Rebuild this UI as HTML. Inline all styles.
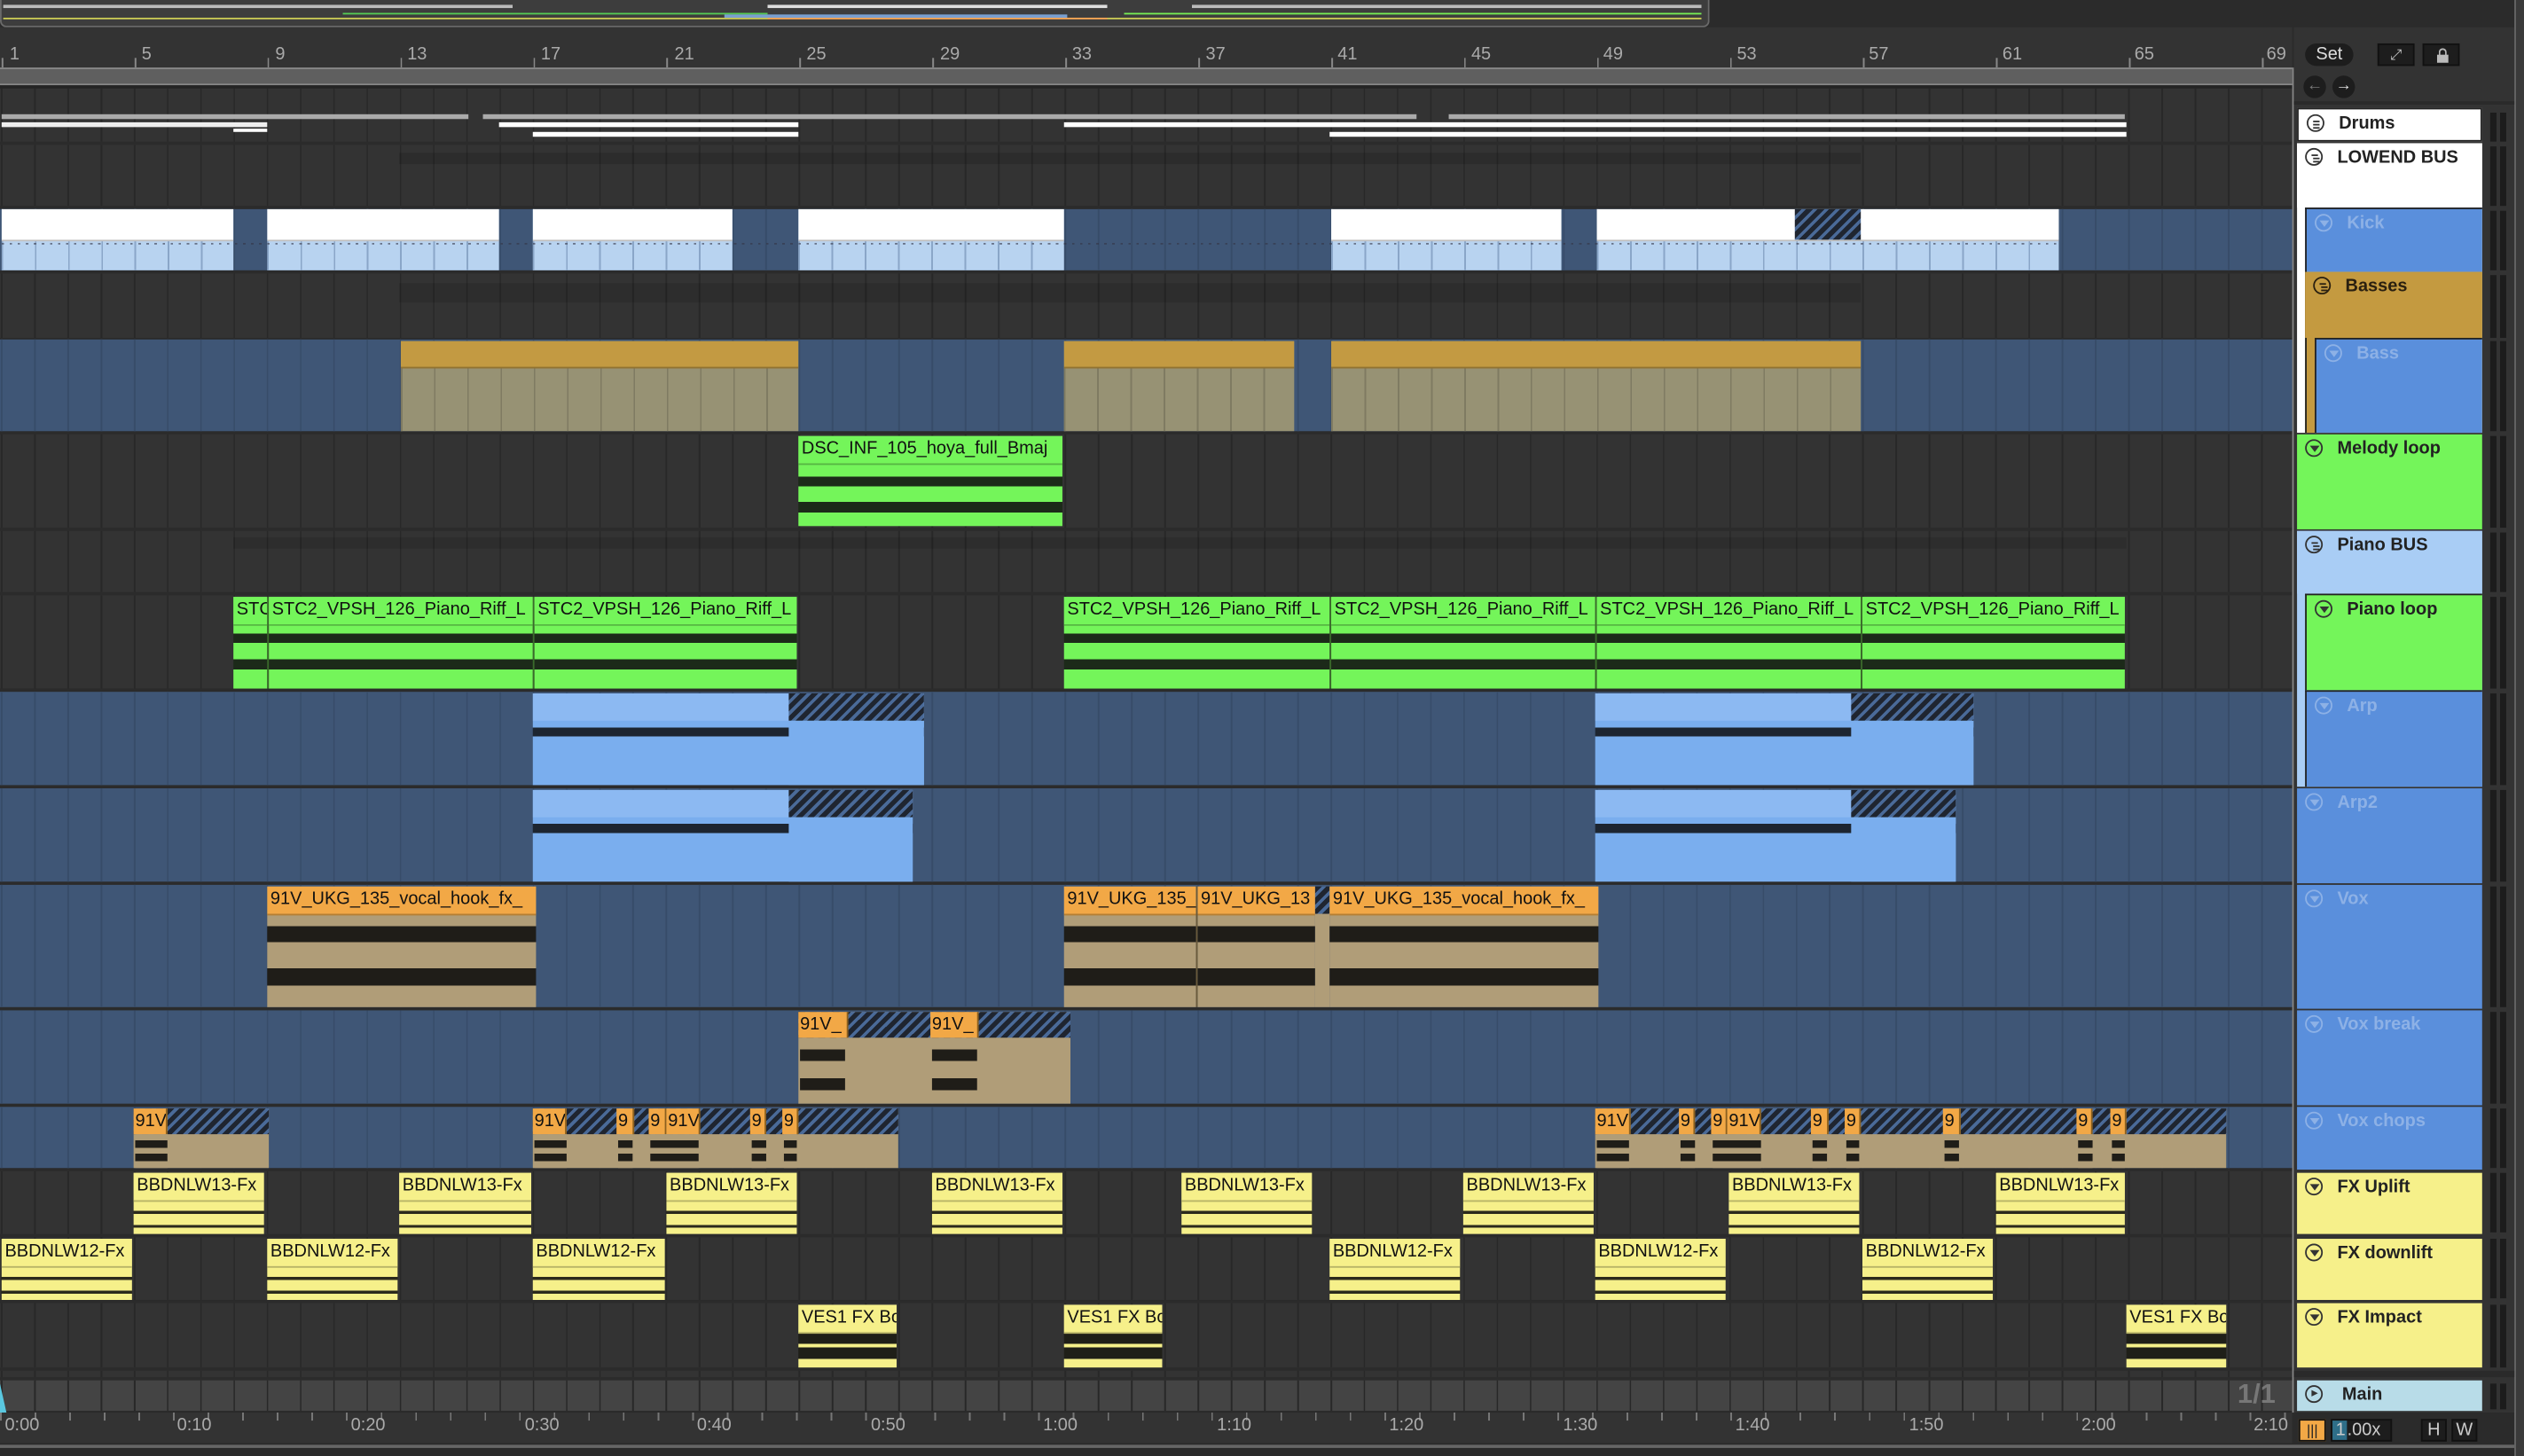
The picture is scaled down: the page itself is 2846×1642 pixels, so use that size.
<!DOCTYPE html>
<html><head><meta charset="utf-8"><style>
html,body{margin:0;padding:0;background:#2a2a2a;overflow:hidden}
#w{position:absolute;left:0;top:0;width:1568px;height:905px;transform:scale(1.81505,1.81436);transform-origin:0 0;background:#2b2b2b;font-family:"Liberation Sans",sans-serif;overflow:hidden}
.a{position:absolute;box-sizing:border-box}
.r{position:absolute;left:0;width:1424px;background-color:#333;background-image:repeating-linear-gradient(90deg,#282828 0 1px,transparent 1px 20.65px);background-position:0.5px 0}
.b{background-color:#3f5676;background-image:repeating-linear-gradient(90deg,#374c69 0 1px,transparent 1px 20.65px)}
.c{position:absolute;box-sizing:border-box;overflow:hidden;font-family:"Liberation Sans Narrow","Liberation Sans",sans-serif;font-size:11px;color:#111;white-space:nowrap}
.c .t{height:17px;line-height:17px;padding-left:2px;overflow:hidden;border-bottom:1px solid rgba(0,0,0,.25)}
.g{background:linear-gradient(#74f55a 0 40%,#1c2a19 40% 50%,#74f55a 50% 68%,#1c2a19 68% 79%,#74f55a 79%)}
.g .t{background:#74f55a}
.k{background-color:#b8d3f0;background-image:repeating-linear-gradient(90deg,#8aa6c8 0 1px,transparent 1px 20.65px)}
.k .t{background:#fff;height:19px}
.bs{background-color:#979274;background-image:repeating-linear-gradient(90deg,#7f7b62 0 1px,transparent 1px 20.65px)}
.bs .t{background:#c39a42;height:16px}
.ar{background:linear-gradient(#7aaeee 0 37%,#1d2530 37% 47%,#7aaeee 47%)}
.ar .t{background:#8cb9f2;border:0}
.h{background:repeating-linear-gradient(135deg,#1f2530 0 3px,#4a6a98 3px 5px)}
.v{background:linear-gradient(#b09d78 0 33%,#1f1d18 33% 46%,#b09d78 46% 68%,#1f1d18 68% 82%,#b09d78 82%)}
.v .t{background:#f2a846}
.vc{background:linear-gradient(#b09d78 0 18%,#1f1d18 18% 40%,#b09d78 40% 58%,#1f1d18 58% 80%,#b09d78 80%)}
.y{background:linear-gradient(#f6f08a 0 62%,#2b2a1c 62% 67%,#f6f08a 67% 85%,#2b2a1c 85% 90%,#f6f08a 90%)}
.y .t{background:#f6f08a}
.im{background:linear-gradient(#f6f08a 0 46%,#1f1f18 46% 62%,#f6f08a 62% 68%,#1f1f18 68% 86%,#f6f08a 86%)}
.im .t{background:#f6f08a}
.o{position:absolute;height:16px;background:#f2a846;font-family:"Liberation Sans Narrow","Liberation Sans",sans-serif;font-size:11px;line-height:16px;padding-left:1px;overflow:hidden;box-sizing:border-box;color:#111;border-right:1px solid #8a6020}
.hd{position:absolute;box-sizing:border-box;font-size:11px;font-weight:bold;color:#222;padding-left:25px;line-height:19px;border:1px solid #222}
.hd i{position:absolute;left:5px;top:3px;width:11px;height:11px;border:1.3px solid #333;border-radius:50%;box-sizing:border-box;font-style:normal}
.fd{color:#8db1e6}.fd i{border-color:#8db1e6}
.m{position:absolute;left:1547px;width:11px;background:linear-gradient(90deg,#1c1c1c 0 4px,transparent 4px 6px,#1c1c1c 6px 10px,transparent 10px)}
.tri{position:absolute;left:2px;top:2.5px;width:0;height:0;border-left:3px solid transparent;border-right:3px solid transparent;border-top:4px solid currentColor}
.lin{position:absolute;left:2.5px;width:4px;height:1.2px;background:#333}
.bn{position:absolute;font-size:11px;color:#aaa}
.tl{position:absolute;font-size:11px;color:#aaa;top:880px}
</style></head><body><div id="w">

<!-- overview -->
<div class="a" style="left:0;top:0;width:1062px;height:17px;background:#3d3d3d;border:1px solid #6a6a6a;border-top:0;border-radius:0 0 4px 4px"></div>
<div class="a" style="left:2px;top:3px;width:1055px;height:2px;background:linear-gradient(90deg,#bbb 0 30%,transparent 30% 45%,#ddd 45% 65%,transparent 65% 70%,#bbb 70% 100%)"></div>
<div class="a" style="left:2px;top:8px;width:1055px;height:1px;background:linear-gradient(90deg,transparent 0 20%,#5c5 20% 45%,transparent 45% 66%,#7e5 66% 100%)"></div>
<div class="a" style="left:2px;top:11px;width:1055px;height:1px;background:linear-gradient(90deg,#cc5 0 45%,#fa5 45% 65%,#cc5 65% 100%)"></div>
<div class="a" style="left:450px;top:9px;width:213px;height:2px;background:#7aa0d0"></div>

<!-- ruler -->
<div class="a" style="left:0;top:17px;width:1424px;height:25px;background:#333"></div>
<span class="bn" style="left:6px;top:28px">1</span><span class="bn" style="left:88px;top:28px">5</span><span class="bn" style="left:171px;top:28px">9</span><span class="bn" style="left:253px;top:28px">13</span><span class="bn" style="left:336px;top:28px">17</span><span class="bn" style="left:419px;top:28px">21</span><span class="bn" style="left:501px;top:28px">25</span><span class="bn" style="left:584px;top:28px">29</span><span class="bn" style="left:666px;top:28px">33</span><span class="bn" style="left:749px;top:28px">37</span><span class="bn" style="left:831px;top:28px">41</span><span class="bn" style="left:914px;top:28px">45</span><span class="bn" style="left:996px;top:28px">49</span><span class="bn" style="left:1079px;top:28px">53</span><span class="bn" style="left:1161px;top:28px">57</span><span class="bn" style="left:1244px;top:28px">61</span><span class="bn" style="left:1326px;top:28px">65</span><span class="bn" style="left:1408px;top:28px">69</span>
<div class="a" style="left:0;top:36px;width:1424px;height:6px;background:repeating-linear-gradient(90deg,#888 0 1px,transparent 1px 82.6px);background-position:1px 0"></div>
<div class="a" style="left:0;top:42px;width:1424px;height:11px;background:#5f5f5f;border-top:1px solid #888;border-bottom:1px solid #888"></div>
<div class="a" style="left:0;top:53px;width:1424px;height:2px;background:#242424"></div>

<!-- tracks -->
<div class="r" style="top:55px;height:33px"></div>
<div class="a" style="left:1px;top:71px;width:290px;height:3px;background:#aaa"></div>
<div class="a" style="left:300px;top:71px;width:580px;height:3px;background:#aaa"></div>
<div class="a" style="left:900px;top:71px;width:420px;height:3px;background:#aaa"></div>
<div class="a" style="left:1px;top:76px;width:165px;height:3px;background:#eee"></div>
<div class="a" style="left:310px;top:76px;width:186px;height:3px;background:#fff"></div>
<div class="a" style="left:661px;top:76px;width:660px;height:3px;background:#fff"></div>
<div class="a" style="left:331px;top:82px;width:165px;height:3px;background:#fff"></div>
<div class="a" style="left:826px;top:82px;width:495px;height:3px;background:#fff"></div>
<div class="a" style="left:145px;top:80px;width:21px;height:2px;background:#fff"></div>

<div class="r" style="top:90px;height:38px"></div>
<div class="a" style="left:248px;top:95px;width:908px;height:7px;background:rgba(0,0,0,.12)"></div>
<div class="r b" style="top:130px;height:38px"></div>
<div class="r" style="top:170px;height:40px"></div>
<div class="a" style="left:248px;top:176px;width:908px;height:12px;background:rgba(0,0,0,.1)"></div>
<div class="r b" style="top:211px;height:57px"></div>
<div class="r" style="top:270px;height:58px"></div>
<div class="r" style="top:330px;height:38px"></div>
<div class="a" style="left:145px;top:334px;width:1176px;height:7px;background:rgba(0,0,0,.1)"></div>
<div class="r" style="top:370px;height:58px"></div>
<div class="r b" style="top:430px;height:58px"></div>
<div class="r b" style="top:490px;height:58px"></div>
<div class="r b" style="top:550px;height:76px"></div>
<div class="r b" style="top:628px;height:58px"></div>
<div class="r b" style="top:688px;height:38px"></div>
<div class="r" style="top:728px;height:39px"></div>
<div class="r" style="top:769px;height:39px"></div>
<div class="r" style="top:810px;height:40px"></div>
<div class="r" style="top:852px;height:4px"></div>
<div class="r" style="top:858px;height:19px;background-color:#444"></div>
<div class="a" style="left:1390px;top:857px;font-size:17px;font-weight:bold;color:#777">1/1</div>

<!-- Kick -->
<div class="c k" style="left:1px;top:130px;width:144px;height:38px"><div class="t"></div></div>
<div class="c k" style="left:166px;top:130px;width:144px;height:38px"><div class="t"></div></div>
<div class="c k" style="left:331px;top:130px;width:124px;height:38px"><div class="t"></div></div>
<div class="c k" style="left:496px;top:130px;width:165px;height:38px"><div class="t"></div></div>
<div class="c k" style="left:827px;top:130px;width:143px;height:38px"><div class="t"></div></div>
<div class="c k" style="left:992px;top:130px;width:165px;height:38px"><div class="t"></div></div>
<div class="a h" style="left:1115px;top:130px;width:41px;height:19px"></div>
<div class="c k" style="left:1157px;top:130px;width:122px;height:38px"><div class="t"></div></div>
<div class="a" style="left:1px;top:151px;width:1280px;height:1px;background:repeating-linear-gradient(90deg,#334 0 1.5px,transparent 1.5px 5px);opacity:.6"></div>

<!-- Bass -->
<div class="c bs" style="left:249px;top:212px;width:247px;height:56px"><div class="t"></div></div>
<div class="c bs" style="left:661px;top:212px;width:143px;height:56px"><div class="t"></div></div>
<div class="c bs" style="left:827px;top:212px;width:329px;height:56px"><div class="t"></div></div>

<!-- Melody -->
<div class="c g" style="left:496px;top:271px;width:164px;height:56px;background:linear-gradient(#74f55a 0 45%,#1c2a19 45% 56%,#74f55a 56% 73%,#1c2a19 73% 85%,#74f55a 85%)"><div class="t">DSC_INF_105_hoya_full_Bmaj</div></div>

<!-- Piano loop -->
<div class="c g" style="left:145px;top:371px;width:21px;height:57px"><div class="t">STC2</div></div>
<div class="c g" style="left:166px;top:371px;width:165px;height:57px;border-left:1px solid #3a6a2a"><div class="t">STC2_VPSH_126_Piano_Riff_L</div></div>
<div class="c g" style="left:331px;top:371px;width:164px;height:57px;border-left:1px solid #3a6a2a"><div class="t">STC2_VPSH_126_Piano_Riff_L</div></div>
<div class="c g" style="left:661px;top:371px;width:165px;height:57px"><div class="t">STC2_VPSH_126_Piano_Riff_L</div></div>
<div class="c g" style="left:826px;top:371px;width:165px;height:57px;border-left:1px solid #3a6a2a"><div class="t">STC2_VPSH_126_Piano_Riff_L</div></div>
<div class="c g" style="left:991px;top:371px;width:165px;height:57px;border-left:1px solid #3a6a2a"><div class="t">STC2_VPSH_126_Piano_Riff_L</div></div>
<div class="c g" style="left:1156px;top:371px;width:164px;height:57px;border-left:1px solid #3a6a2a"><div class="t">STC2_VPSH_126_Piano_Riff_L</div></div>

<!-- Arp -->
<div class="c ar" style="left:331px;top:431px;width:243px;height:57px"><div class="t"></div></div>
<div class="a h" style="left:490px;top:431px;width:84px;height:17px"></div>
<div class="a" style="left:490px;top:448px;width:84px;height:40px;background:#7aaeee"></div>
<div class="c ar" style="left:991px;top:431px;width:235px;height:57px"><div class="t"></div></div>
<div class="a h" style="left:1150px;top:431px;width:76px;height:17px"></div>
<div class="a" style="left:1150px;top:448px;width:76px;height:40px;background:#7aaeee"></div>
<!-- Arp2 -->
<div class="c ar" style="left:331px;top:491px;width:236px;height:57px"><div class="t"></div></div>
<div class="a h" style="left:490px;top:491px;width:77px;height:17px"></div>
<div class="a" style="left:490px;top:508px;width:77px;height:40px;background:#7aaeee"></div>
<div class="c ar" style="left:991px;top:491px;width:224px;height:57px"><div class="t"></div></div>
<div class="a h" style="left:1150px;top:491px;width:65px;height:17px"></div>
<div class="a" style="left:1150px;top:508px;width:65px;height:40px;background:#7aaeee"></div>

<!-- Vox -->
<div class="c v" style="left:166px;top:551px;width:167px;height:75px"><div class="t">91V_UKG_135_vocal_hook_fx_</div></div>
<div class="c v" style="left:661px;top:551px;width:82px;height:75px"><div class="t">91V_UKG_135_</div></div>
<div class="c v" style="left:743px;top:551px;width:74px;height:75px;border-left:1px solid #6a5a3a"><div class="t">91V_UKG_13</div></div>
<div class="a h" style="left:817px;top:551px;width:9px;height:17px"></div>
<div class="a" style="left:817px;top:568px;width:9px;height:58px;background:#b09d78"></div>
<div class="c v" style="left:826px;top:551px;width:167px;height:75px"><div class="t">91V_UKG_135_vocal_hook_fx_</div></div>

<!-- Vox break -->
<div class="a" style="left:496px;top:629px;width:169px;height:57px;background:#b09d78"></div>
<div class="a h" style="left:496px;top:629px;width:169px;height:16px"></div>
<div class="o" style="left:496px;top:629px;width:31px">91V_</div>
<div class="o" style="left:578px;top:629px;width:30px">91V_</div>
<div class="a" style="left:497px;top:648px;width:28px;height:36px;background:linear-gradient(#b09d78 0 12%,#1f1d18 12% 32%,#b09d78 32% 62%,#1f1d18 62% 82%,#b09d78 82%)"></div>
<div class="a" style="left:579px;top:648px;width:28px;height:36px;background:linear-gradient(#b09d78 0 12%,#1f1d18 12% 32%,#b09d78 32% 62%,#1f1d18 62% 82%,#b09d78 82%)"></div>

<!-- Vox chops -->
<div class="a" style="left:83px;top:689px;width:84px;height:37px;background:#b09d78"></div>
<div class="a h" style="left:83px;top:689px;width:84px;height:16px"></div>
<div class="o" style="left:83px;top:689px;width:21px">91V</div>
<div class="a vc" style="left:84px;top:705px;width:20px;height:21px"></div>
<div class="a" style="left:331px;top:689px;width:227px;height:37px;background:#b09d78"></div>
<div class="a h" style="left:331px;top:689px;width:227px;height:16px"></div>
<div class="o" style="left:331px;top:689px;width:21px">91V</div><div class="o" style="left:383px;top:689px;width:11px">9</div><div class="o" style="left:403px;top:689px;width:11px">9</div><div class="o" style="left:414px;top:689px;width:21px">91V</div><div class="o" style="left:466px;top:689px;width:10px">9</div><div class="o" style="left:486px;top:689px;width:10px">9</div>
<div class="a vc" style="left:332px;top:705px;width:20px;height:21px"></div><div class="a vc" style="left:384px;top:705px;width:9px;height:21px"></div><div class="a vc" style="left:404px;top:705px;width:30px;height:21px"></div><div class="a vc" style="left:467px;top:705px;width:9px;height:21px"></div><div class="a vc" style="left:487px;top:705px;width:8px;height:21px"></div>
<div class="a" style="left:991px;top:689px;width:392px;height:37px;background:#b09d78"></div>
<div class="a h" style="left:991px;top:689px;width:392px;height:16px"></div>
<div class="o" style="left:991px;top:689px;width:22px">91V</div><div class="o" style="left:1043px;top:689px;width:10px">9</div><div class="o" style="left:1063px;top:689px;width:10px">9</div><div class="o" style="left:1073px;top:689px;width:21px">91V</div><div class="o" style="left:1125px;top:689px;width:11px">9</div><div class="o" style="left:1146px;top:689px;width:10px">9</div><div class="o" style="left:1207px;top:689px;width:11px">9</div><div class="o" style="left:1290px;top:689px;width:10px">9</div><div class="o" style="left:1311px;top:689px;width:10px">9</div>
<div class="a vc" style="left:992px;top:705px;width:20px;height:21px"></div><div class="a vc" style="left:1044px;top:705px;width:9px;height:21px"></div><div class="a vc" style="left:1064px;top:705px;width:30px;height:21px"></div><div class="a vc" style="left:1126px;top:705px;width:9px;height:21px"></div><div class="a vc" style="left:1147px;top:705px;width:8px;height:21px"></div><div class="a vc" style="left:1208px;top:705px;width:9px;height:21px"></div><div class="a vc" style="left:1291px;top:705px;width:9px;height:21px"></div><div class="a vc" style="left:1312px;top:705px;width:8px;height:21px"></div>

<!-- FX Uplift -->
<div class="c y" style="left:83px;top:729px;width:81px;height:38px"><div class="t">BBDNLW13-Fx</div></div>
<div class="c y" style="left:248px;top:729px;width:82px;height:38px"><div class="t">BBDNLW13-Fx</div></div>
<div class="c y" style="left:414px;top:729px;width:81px;height:38px"><div class="t">BBDNLW13-Fx</div></div>
<div class="c y" style="left:579px;top:729px;width:81px;height:38px"><div class="t">BBDNLW13-Fx</div></div>
<div class="c y" style="left:734px;top:729px;width:81px;height:38px"><div class="t">BBDNLW13-Fx</div></div>
<div class="c y" style="left:909px;top:729px;width:81px;height:38px"><div class="t">BBDNLW13-Fx</div></div>
<div class="c y" style="left:1074px;top:729px;width:81px;height:38px"><div class="t">BBDNLW13-Fx</div></div>
<div class="c y" style="left:1240px;top:729px;width:80px;height:38px"><div class="t">BBDNLW13-Fx</div></div>
<!-- FX downlift -->
<div class="c y" style="left:1px;top:770px;width:81px;height:38px"><div class="t">BBDNLW12-Fx</div></div>
<div class="c y" style="left:166px;top:770px;width:81px;height:38px"><div class="t">BBDNLW12-Fx</div></div>
<div class="c y" style="left:331px;top:770px;width:82px;height:38px"><div class="t">BBDNLW12-Fx</div></div>
<div class="c y" style="left:826px;top:770px;width:81px;height:38px"><div class="t">BBDNLW12-Fx</div></div>
<div class="c y" style="left:991px;top:770px;width:81px;height:38px"><div class="t">BBDNLW12-Fx</div></div>
<div class="c y" style="left:1157px;top:770px;width:81px;height:38px"><div class="t">BBDNLW12-Fx</div></div>
<!-- FX Impact -->
<div class="c im" style="left:496px;top:811px;width:61px;height:39px"><div class="t">VES1 FX Bo</div></div>
<div class="c im" style="left:661px;top:811px;width:61px;height:39px"><div class="t">VES1 FX Bo</div></div>
<div class="c im" style="left:1321px;top:811px;width:62px;height:39px"><div class="t">VES1 FX Bo</div></div>

<!-- time ruler -->
<div class="a" style="left:0;top:877px;width:1424px;height:20px;background:#333;border-top:1px solid #2a2a2a"></div>
<div class="a" style="left:0;top:878px;width:1424px;height:5px;background:repeating-linear-gradient(90deg,#777 0 1px,transparent 1px 21.5px)"></div>
<span class="tl" style="left:3px">0:00</span><span class="tl" style="left:110px">0:10</span><span class="tl" style="left:218px">0:20</span><span class="tl" style="left:326px">0:30</span><span class="tl" style="left:433px">0:40</span><span class="tl" style="left:541px">0:50</span><span class="tl" style="left:648px">1:00</span><span class="tl" style="left:756px">1:10</span><span class="tl" style="left:863px">1:20</span><span class="tl" style="left:971px">1:30</span><span class="tl" style="left:1078px">1:40</span><span class="tl" style="left:1186px">1:50</span><span class="tl" style="left:1293px">2:00</span><span class="tl" style="left:1400px">2:10</span>
<div class="a" style="left:0;top:898px;width:1568px;height:7px;background:#2a2a2a;border-top:2px solid #666"></div>
<div class="a" style="left:0;top:860px;width:0;height:0;border-left:4px solid #5ac8e0;border-top:18px solid transparent"></div>

<!-- loop end line -->
<div class="a" style="left:1424px;top:42px;width:1px;height:836px;background:#888"></div>

<!-- right panel -->
<div class="a" style="left:1425px;top:17px;width:143px;height:861px;background:#333"></div>
<div class="a" style="left:1562px;top:0;width:6px;height:905px;background:#3a3a3a;border-left:1px solid #666"></div>
<div class="a" style="left:1432px;top:27px;width:30px;height:14px;background:#1d1d1d;border-radius:7px;color:#ddd;font-size:11px;text-align:center;line-height:14px">Set</div>
<div class="a" style="left:1477px;top:27px;width:23px;height:14px;background:#1d1d1d;border:1px solid #111;color:#ccc;font-size:9px;text-align:center;line-height:13px">&#x2922;</div>
<div class="a" style="left:1505px;top:27px;width:23px;height:14px;background:#1d1d1d;border:1px solid #111"><div class="a" style="left:8px;top:6px;width:7px;height:5px;background:#bbb"></div><div class="a" style="left:9px;top:2px;width:5px;height:6px;border:1.3px solid #bbb;border-bottom:0;border-radius:3px 3px 0 0"></div></div>
<div class="a" style="left:1431px;top:47px;width:14px;height:14px;background:#1d1d1d;border-radius:50%;color:#777;font-size:10px;text-align:center;line-height:14px">&#x2190;</div>
<div class="a" style="left:1449px;top:47px;width:14px;height:14px;background:#1d1d1d;border-radius:50%;color:#ddd;font-size:10px;text-align:center;line-height:14px">&#x2192;</div>

<div class="a" style="left:1425px;top:63px;width:137px;height:2px;background:#2a2a2a"></div>
<div class="hd" style="left:1427px;top:67px;width:115px;height:21px;background:#fff">Drums<i><span class="lin" style="top:2.5px"></span><span class="lin" style="top:4.5px"></span><span class="lin" style="top:6.5px"></span></i></div>
<div class="a" style="left:1427px;top:89px;width:115px;height:180px;background:#fff"></div>
<div class="hd" style="left:1427px;top:89px;width:115px;height:40px;background:#fff;border:0">LOWEND BUS<i><span class="lin" style="top:2.5px"></span><span class="lin" style="top:4.5px;left:3.5px"></span><span class="lin" style="top:6.5px;left:4px"></span></i></div>
<div class="hd fd" style="left:1432px;top:129px;width:110px;height:40px;background:#5a8fdc;border-width:1px 0 0 1px;border-color:#222">Kick<i><span class="tri"></span></i></div>
<div class="a" style="left:1432px;top:169px;width:110px;height:100px;background:#c49a40;border-left:1px solid #222"></div>
<div class="hd" style="left:1432px;top:169px;width:110px;height:41px;background:#c49a40;border:0;color:#2a2010">Basses<i style="border-color:#2a2010"><span class="lin" style="top:2.5px;background:#2a2010"></span><span class="lin" style="top:4.5px;left:3.5px;background:#2a2010"></span><span class="lin" style="top:6.5px;left:4px;background:#2a2010"></span></i></div>
<div class="hd fd" style="left:1438px;top:210px;width:104px;height:59px;background:#5a8fdc;border-width:1px 0 0 1px;border-color:#222">Bass<i><span class="tri"></span></i></div>
<div class="hd" style="left:1427px;top:270px;width:115px;height:59px;background:#74f55a;border:0">Melody loop<i><span class="tri" style="color:#333"></span></i></div>
<div class="a" style="left:1427px;top:330px;width:115px;height:159px;background:#a9cdf5"></div>
<div class="hd" style="left:1427px;top:330px;width:115px;height:39px;background:#a9cdf5;border:0">Piano BUS<i><span class="lin" style="top:2.5px"></span><span class="lin" style="top:4.5px;left:3.5px"></span><span class="lin" style="top:6.5px;left:4px"></span></i></div>
<div class="hd" style="left:1432px;top:369px;width:110px;height:60px;background:#74f55a;border-width:1px 0 0 1px;border-color:#222">Piano loop<i><span class="tri" style="color:#333"></span></i></div>
<div class="hd fd" style="left:1432px;top:429px;width:110px;height:60px;background:#5a8fdc;border-width:1px 0 0 1px;border-color:#222">Arp<i><span class="tri"></span></i></div>
<div class="hd fd" style="left:1427px;top:490px;width:115px;height:59px;background:#5a8fdc;border:0">Arp2<i><span class="tri"></span></i></div>
<div class="hd fd" style="left:1427px;top:550px;width:115px;height:77px;background:#5a8fdc;border:0">Vox<i><span class="tri"></span></i></div>
<div class="hd fd" style="left:1427px;top:628px;width:115px;height:59px;background:#5a8fdc;border:0">Vox break<i><span class="tri"></span></i></div>
<div class="hd fd" style="left:1427px;top:688px;width:115px;height:39px;background:#5a8fdc;border:0">Vox chops<i><span class="tri"></span></i></div>
<div class="hd" style="left:1427px;top:729px;width:115px;height:38px;background:#f6f08a;border:0">FX Uplift<i><span class="tri" style="color:#333"></span></i></div>
<div class="hd" style="left:1427px;top:770px;width:115px;height:38px;background:#f6f08a;border:0">FX downlift<i><span class="tri" style="color:#333"></span></i></div>
<div class="hd" style="left:1427px;top:810px;width:115px;height:40px;background:#f6f08a;border:0">FX Impact<i><span class="tri" style="color:#333"></span></i></div>
<div class="a" style="left:1425px;top:852px;width:137px;height:4px;background:#2a2a2a"></div>
<div class="hd" style="left:1427px;top:858px;width:115px;height:19px;background:#b8dce8;border:0;padding-left:28px;line-height:18px">Main<i style="top:3px"><span style="position:absolute;left:3px;top:2px;border-top:2.5px solid transparent;border-bottom:2.5px solid transparent;border-left:4px solid #333"></span></i></div>

<div class="m" style="top:70px;height:18px"></div><div class="m" style="top:91px;height:37px"></div><div class="m" style="top:131px;height:37px"></div><div class="m" style="top:171px;height:39px"></div><div class="m" style="top:212px;height:56px"></div><div class="m" style="top:271px;height:57px"></div><div class="m" style="top:331px;height:37px"></div><div class="m" style="top:371px;height:57px"></div><div class="m" style="top:431px;height:57px"></div><div class="m" style="top:491px;height:57px"></div><div class="m" style="top:551px;height:75px"></div><div class="m" style="top:629px;height:57px"></div><div class="m" style="top:689px;height:37px"></div><div class="m" style="top:729px;height:37px"></div><div class="m" style="top:770px;height:37px"></div><div class="m" style="top:811px;height:39px"></div><div class="m" style="top:860px;height:16px"></div>

<div class="a" style="left:1428px;top:882px;width:17px;height:14px;background:#f2a846;border:1px solid #111;color:#222;font-size:9px;text-align:center;line-height:12px">|||</div>
<div class="a" style="left:1448px;top:882px;width:38px;height:14px;background:#1d1d1d;border:1px solid #111;color:#ccc;font-size:11px;line-height:12px"><span style="background:#2e6e88;padding:0 1px 0 2px">1</span>.00x</div>
<div class="a" style="left:1504px;top:882px;width:16px;height:14px;background:#1d1d1d;border:1px solid #111;color:#ccc;font-size:11px;text-align:center;line-height:12px">H</div>
<div class="a" style="left:1523px;top:882px;width:16px;height:14px;background:#1d1d1d;border:1px solid #111;color:#ccc;font-size:11px;text-align:center;line-height:12px">W</div>

</div></body></html>
